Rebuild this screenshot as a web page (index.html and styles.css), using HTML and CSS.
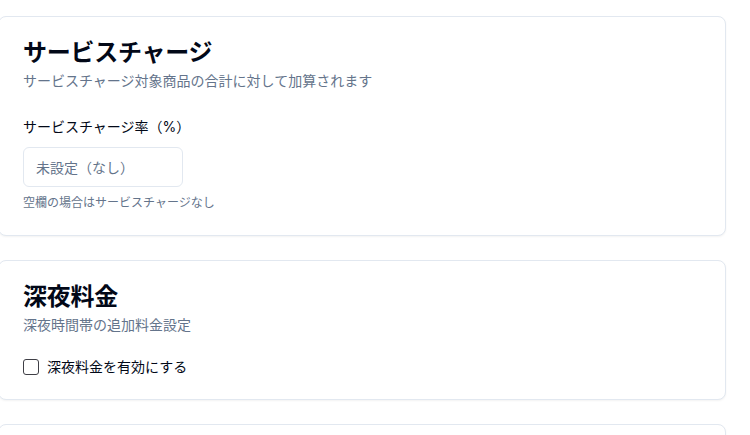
FILE: index.html
```html
<!DOCTYPE html>
<html lang="ja">
<head>
  <meta charset="UTF-8">
  <title>料金設定</title>
  <link rel="stylesheet" href="styles.css">
</head>
<body>
  <div class="settings">

    <!-- Service charge -->
    <div class="card">
      <div class="card-header">
        <h2 class="card-title">サービスチャージ</h2>
        <p class="card-desc">サービスチャージ対象商品の合計に対して加算されます</p>
      </div>
      <div class="card-content">
        <label class="field-label" for="serviceRate">サービスチャージ率（%）</label>
        <input id="serviceRate" class="field-input" type="number" placeholder="未設定（なし）">
        <p class="field-hint">空欄の場合はサービスチャージなし</p>
      </div>
    </div>

    <!-- Late night -->
    <div class="card">
      <div class="card-header">
        <h2 class="card-title">深夜料金</h2>
        <p class="card-desc">深夜時間帯の追加料金設定</p>
      </div>
      <div class="card-content">
        <label class="check-row">
          <input type="checkbox" class="check-box">
          <span>深夜料金を有効にする</span>
        </label>
      </div>
    </div>

    <div class="card">
      <div class="card-header">
        <h2 class="card-title">&nbsp;</h2>
      </div>
    </div>

  </div>
</body>
</html>
```

FILE: styles.css
```css
:root {
  --border: #e2e8f0;
  --text: #020817;
  --muted: #64748b;
}

* {
  box-sizing: border-box;
}

body {
  margin: 0;
  background: #fff;
  color: var(--text);
  font-family: Inter, "Noto Sans CJK JP", sans-serif;
  overflow: hidden;
}

.settings {
  display: flex;
  flex-direction: column;
  gap: 24px;
  padding-top: 16px;
  margin-left: -2px;
  width: 728px;
}

.card {
  background: #fff;
  border: 1px solid var(--border);
  border-radius: 8px;
  box-shadow: 0 1px 2px rgba(0, 0, 0, 0.05);
}

.card-header {
  padding: 24px;
  display: flex;
  flex-direction: column;
  gap: 6px;
}

.card-title {
  margin: 0;
  font-size: 24px;
  line-height: 24px;
  font-weight: 700;
  letter-spacing: -0.01em;
}

.card-desc {
  margin: 0;
  font-size: 14px;
  line-height: 20px;
  color: var(--muted);
}

.card-content {
  padding: 0 24px 24px;
  display: flex;
  flex-direction: column;
  align-items: flex-start;
}

.field-label {
  margin-top: 2px;
  font-size: 14px;
  line-height: 20px;
  font-weight: 400;
}

.field-input {
  margin-top: 10px;
  width: 160px;
  height: 40px;
  padding: 0 12px;
  border: 1px solid var(--border);
  border-radius: 6px;
  font-family: inherit;
  font-size: 14px;
  color: var(--text);
  background: #fff;
  outline: none;
}

.field-input::placeholder {
  color: var(--muted);
}

.field-hint {
  margin: 8px 0 0;
  font-size: 12px;
  line-height: 16px;
  color: var(--muted);
}

.check-row {
  display: flex;
  align-items: center;
  gap: 8px;
  font-size: 14px;
  line-height: 16px;
}

.check-box {
  appearance: none;
  margin: 0;
  width: 16px;
  height: 16px;
  border: 1px solid #3f3f46;
  border-radius: 3px;
  background: #fff;
}
```
